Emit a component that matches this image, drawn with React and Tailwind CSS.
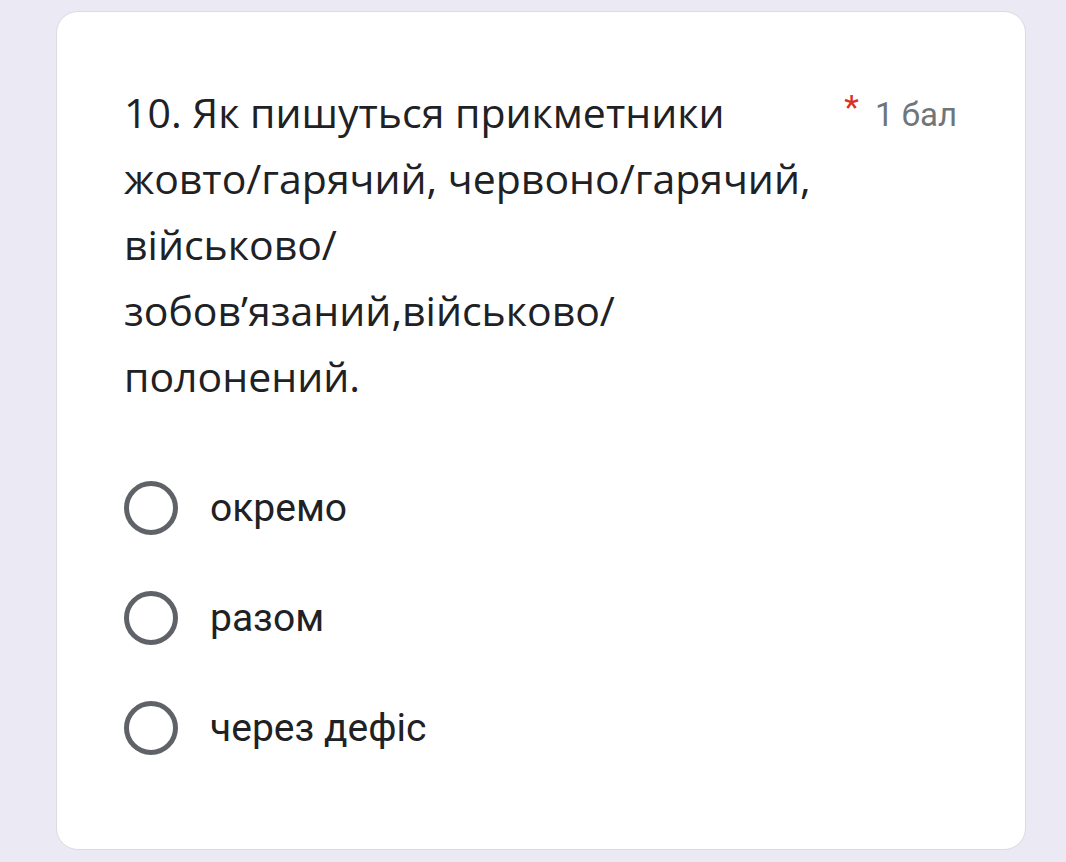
import { useState } from 'react';

const options = ['окремо', 'разом', 'через дефіс'];

function Radio({ label, checked, onSelect }) {
  return (
    <button
      type="button"
      onClick={onSelect}
      className="flex items-center gap-[32px] h-[110px] text-left"
    >
      <span className="w-[54px] h-[54px] rounded-full border-[5px] border-[#5f6368] flex items-center justify-center shrink-0">
        {checked && <span className="w-[26px] h-[26px] rounded-full bg-[#673ab7]" />}
      </span>
      <span className="text-[39px] text-[#202124] font-['Roboto',sans-serif] leading-none">{label}</span>
    </button>
  );
}

export default function App() {
  const [value, setValue] = useState(null);

  return (
    <div className="min-h-[862px] bg-[#ebe9f4] pt-[11px] pl-[56px] pr-[40px] pb-[12px] font-['Roboto',sans-serif]">
      <div className="h-[839px] bg-white rounded-[22px] border border-[#dadce0] pl-[67px] pr-[68px] pt-[67px]">
        <div className="flex justify-between">
          <h2 className="text-[41px] leading-[66px] text-[#202124] font-['Open_Sans',sans-serif]">
            10. Як пишуться прикметники
            <br />
            жовто/гарячий, червоно/гарячий,
            <br />
            військово/
            <br />
            зобов’язаний,військово/
            <br />
            полонений.
          </h2>
          <div className="flex items-start gap-[16px] pt-[8px]">
            <span className="text-[#d93025] text-[34px] leading-[40px]">*</span>
            <span className="text-[#70757a] text-[33px] leading-[46px] mt-[5px]">1 бал</span>
          </div>
        </div>

        <div className="mt-[44px] flex flex-col">
          {options.map((o) => (
            <Radio key={o} label={o} checked={value === o} onSelect={() => setValue(o)} />
          ))}
        </div>
      </div>
    </div>
  );
}
